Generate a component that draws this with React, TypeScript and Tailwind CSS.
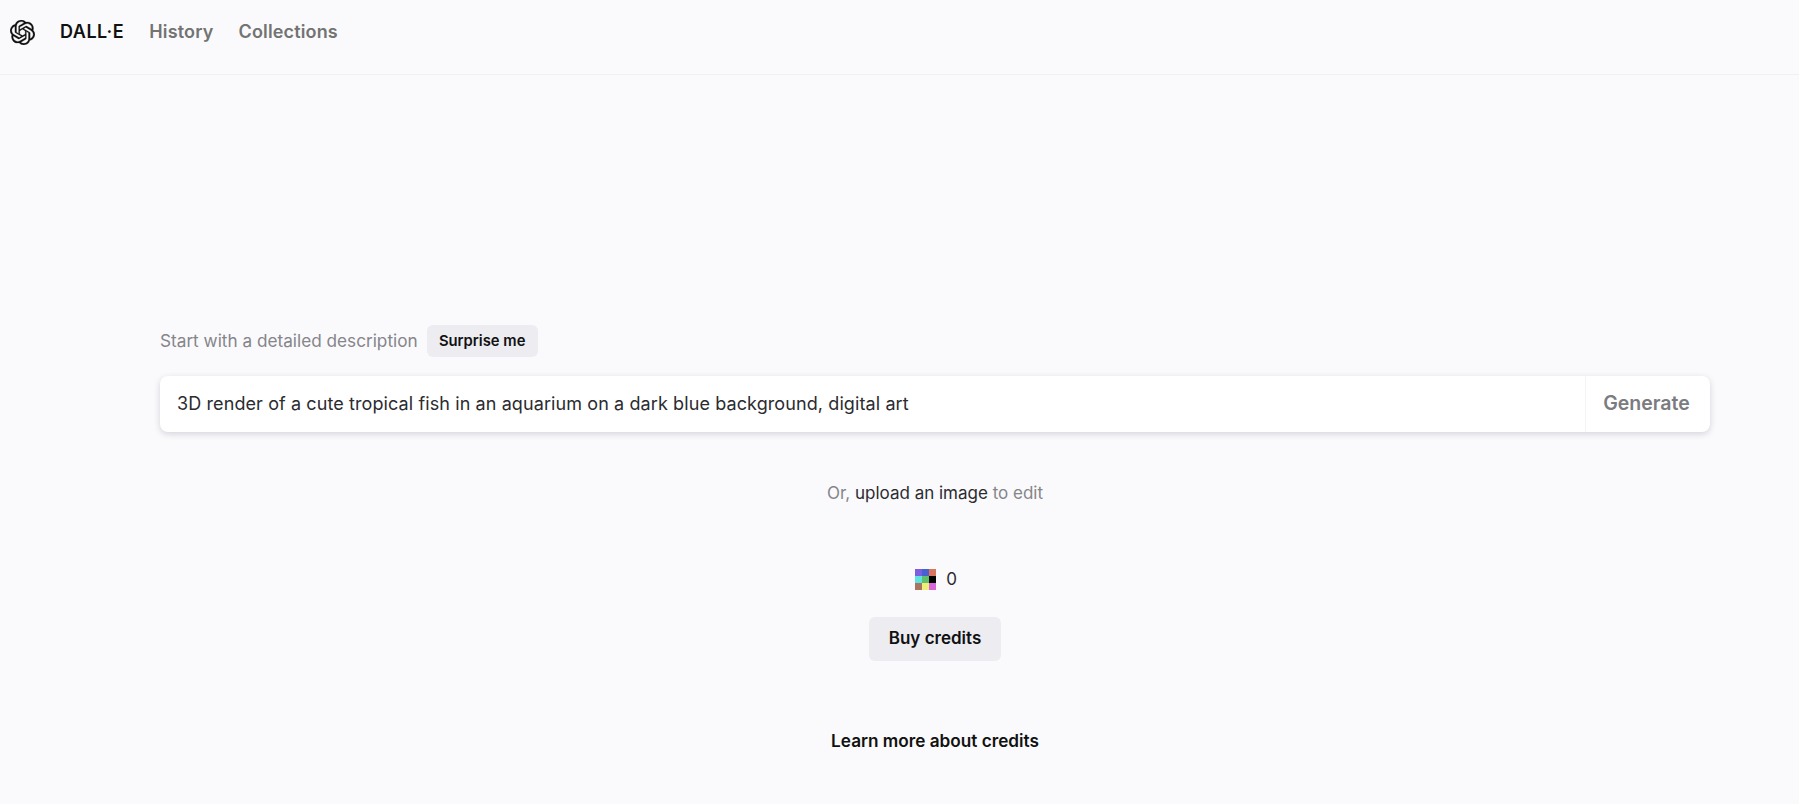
import { SiOpenai } from "react-icons/si";

const pixels = ["#7b5fe0", "#4a5fd0", "#d9745f", "#5fe3e0", "#5fbf6a", "#000000", "#a8735f", "#f0ee7a", "#d767d9"];

export default function App() {
  return (
    <div className="min-h-[804px] bg-[#fafafc] font-['Inter',sans-serif] text-[#202123]">
      <header className="flex h-[75px] items-start border-b border-[#f0f0f2] pl-[10px] pt-[20px]">
        <SiOpenai className="h-[25px] w-[25px] stroke-[0.25px] text-[#111]" />
        <nav className="ml-[25px] flex h-[22px] items-center gap-[25px] text-[18px] font-semibold tracking-[0.15px]">
          <span className="tracking-[0.5px] text-[#111]">DALL·E</span>
          <span className="text-[#737373]">History</span>
          <span className="text-[#737373]">Collections</span>
        </nav>
      </header>

      <main className="flex flex-col pl-[160px] pr-[89px] pt-[250px]">
        <div className="flex items-center gap-[9px] text-[17.2px] leading-[30px] text-[#85858a]">
          <span>Start with a detailed description</span>
          <button className="h-[32px] w-[111px] rounded-md bg-[#ececf1] text-[14.8px] font-semibold text-[#111]">Surprise me</button>
        </div>

        <div className="mt-[19px] flex h-[56px] items-center rounded-lg bg-white shadow-[0_2px_6px_rgba(60,60,90,0.2)]">
          <div className="flex-1 pb-[2px] pl-[17px] text-[18px] tracking-[0.1px] text-[#2b2b30]">3D render of a cute tropical fish in an aquarium on a dark blue background, digital art</div>
          <div className="flex h-full w-[125px] items-center justify-center border-l border-[#f5f5f7] pr-[3px] text-[19.5px] font-semibold text-[#7b7b80]">Generate</div>
        </div>

        <p className="mt-[49px] text-center text-[17px] leading-[24px] text-[#85858a]">
          Or, <span className="text-[#2b2b30]">upload an image</span> to edit
        </p>

        <div className="mt-[62px] flex h-[24px] items-center justify-center gap-[10px] pl-[2px]">
          <div className="grid h-[21px] w-[21px] grid-cols-3 grid-rows-3">
            {pixels.map((c) => (
              <span key={c} style={{ backgroundColor: c }} />
            ))}
          </div>
          <span className="text-[17px] leading-[24px] text-[#2b2b30]">0</span>
        </div>

        <button className="mt-[26px] h-[44px] w-[132px] self-center rounded-md bg-[#ececf1] text-[17px] font-semibold text-[#111]">Buy credits</button>

        <p className="mt-[68px] text-center text-[17.2px] font-semibold leading-[24px] text-[#111]">Learn more about credits</p>
      </main>
    </div>
  );
}
